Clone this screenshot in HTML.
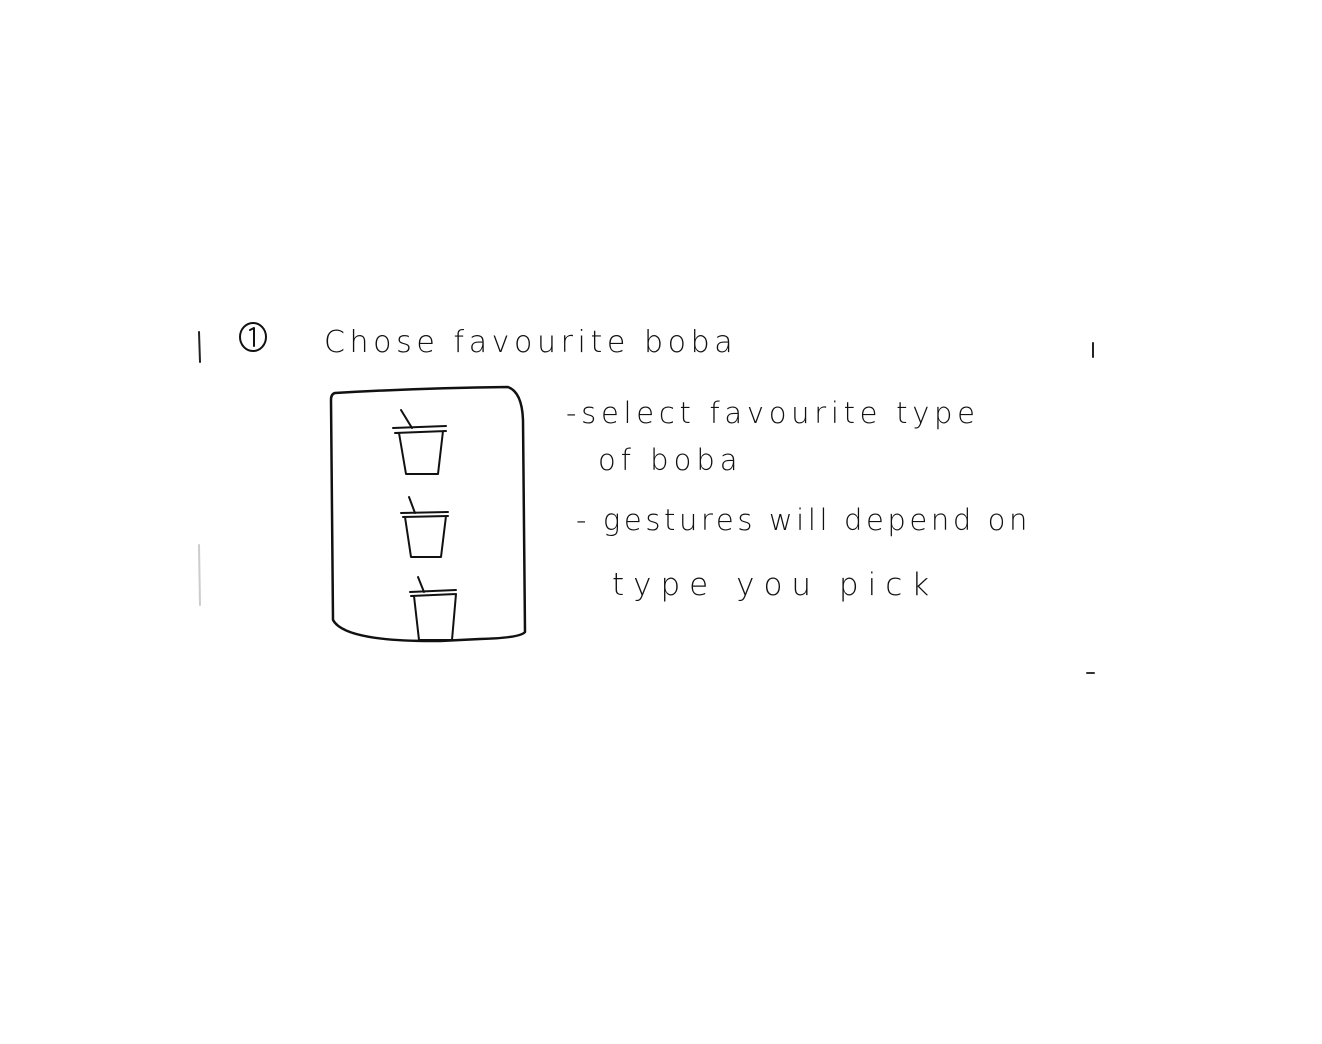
<!DOCTYPE html>
<html><head><meta charset="utf-8"><style>
html,body{margin:0;padding:0;background:#fff;}
body{width:1322px;height:1044px;position:relative;overflow:hidden;}
svg{position:absolute;left:0;top:0;}
text{font-family:"DejaVu Sans","Liberation Sans",sans-serif;fill:#111;font-weight:300;}
</style></head><body>
<svg width="1322" height="1044" viewBox="0 0 1322 1044" fill="none" stroke="#111" stroke-linecap="round" stroke-linejoin="round">
<path d="M199 332 L200 362" stroke="#222" stroke-width="2"/>
<path d="M1093 343 L1093 357" stroke="#222" stroke-width="2"/>
<path d="M199 545 L200 605" stroke="#ccc" stroke-width="2"/>
<path d="M1087 673 L1094 673" stroke="#333" stroke-width="2"/>
<ellipse cx="253" cy="337" rx="13" ry="14" stroke-width="2"/>
<path d="M250 330 L254 328 L254 346" stroke-width="2"/>
<text x="324" y="352" font-size="30" stroke="none" letter-spacing="4.6">Chose favourite boba</text>
<path d="M335 393 Q420 388 508 387 Q522 392 523 420 L525 632 Q520 638 480 639 L440 641 Q345 642 333 620 L331 400 Q331 394 335 393 Z" stroke-width="2.5"/>
<g stroke-width="2">
<path d="M393 428 L446 426 M395 433 L446 431 M399 433 L406 474 L438 474 L443 431"/>
<path d="M401 410 L412 428"/>
<path d="M401 513 L448 512 M403 517 L448 516 M405 517 L411 557 L441 557 L446 516"/>
<path d="M409 497 L415 513"/>
<path d="M410 592 L456 590 M411 596 L456 594 M414 596 L419 640 L452 640 L456 594"/>
<path d="M418 577 L424 592"/>
</g>
<text x="566" y="423" font-size="29" stroke="none" letter-spacing="4.7">-select favourite type</text>
<text x="598" y="470" font-size="29" stroke="none" letter-spacing="5">of boba</text>
<text x="576" y="530" font-size="29" stroke="none" letter-spacing="3.6">- gestures will depend on</text>
<text x="612" y="595" font-size="31" stroke="none" letter-spacing="9">type you pick</text>
</svg>
</body></html>
